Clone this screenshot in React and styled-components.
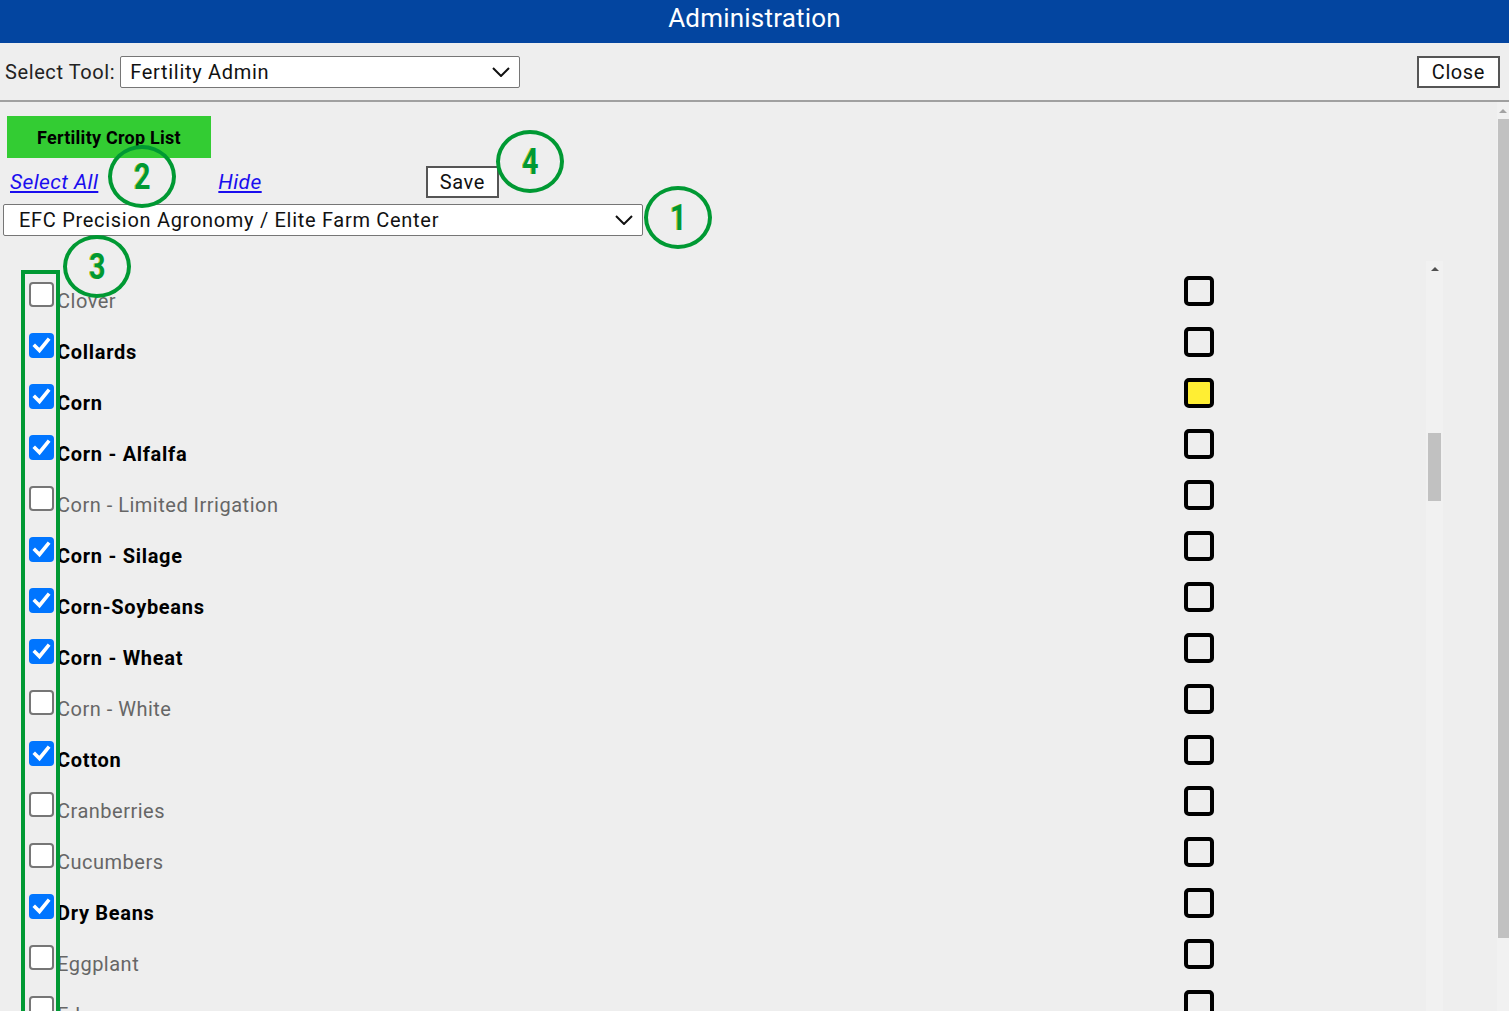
import React from "react";
import styled, { createGlobalStyle } from "styled-components";

const GlobalStyle = createGlobalStyle`
  html, body {
    margin: 0;
    padding: 0;
    height: 100%;
    overflow: hidden;
    background: #eeeeee;
    font-family: Roboto, "Liberation Sans", Arial, sans-serif;
  }
`;

const Page = styled.div`
  width: 1509px;
  height: 1011px;
  display: flex;
  flex-direction: column;
  overflow: hidden;
`;

const Header = styled.div`
  height: 43px;
  background: #0345a0;
  color: #fff;
  font-size: 26px;
  letter-spacing: 0.2px;
  display: flex;
  align-items: center;
  justify-content: center;
  padding-bottom: 7px;
  box-sizing: border-box;
`;

const Toolbar = styled.div`
  height: 59px;
  box-sizing: border-box;
  border-bottom: 2px solid #a0a0a0;
  display: flex;
  align-items: center;
  padding: 0 9px 0 5px;
  gap: 5px;
  color: #222;
  font-size: 20px;
  letter-spacing: 0.6px;
`;

const SelectBox = styled.div`
  width: ${(p) => p.width}px;
  height: 32px;
  box-sizing: border-box;
  background: #fff;
  border: 1px solid #767676;
  border-radius: 2px;
  display: flex;
  align-items: center;
  justify-content: space-between;
  padding: 0 9px 0 ${(p) => p.padLeft || 9}px;
  font-size: 20px;
  letter-spacing: 0.7px;
  color: #111;
`;

const Spacer = styled.div`
  flex: 1;
`;

const PlainButton = styled.button`
  height: 32px;
  padding: 0 ${(p) => p.padX || 12}px;
  background: #fff;
  border: 2px solid #555;
  font-family: Roboto, "Liberation Sans", Arial, sans-serif;
  font-size: 20px;
  letter-spacing: 0.6px;
  color: #111;
  margin: ${(p) => p.margin || 0};
`;

const Body = styled.div`
  flex: 1;
  display: flex;
  min-height: 0;
`;

const Content = styled.div`
  flex: 1;
  position: relative;
  display: flex;
  flex-direction: column;
  min-width: 0;
`;

const TabButton = styled.div`
  width: 204px;
  height: 42px;
  margin: 14px 0 0 7px;
  background: #33cc33;
  color: #000;
  font-weight: 700;
  font-size: 18px;
  letter-spacing: 0.25px;
  display: flex;
  align-items: center;
  justify-content: center;
`;

const LinkRow = styled.div`
  display: flex;
  align-items: center;
  margin: 8px 0 0 10px;
  height: 31px;
`;

const Link = styled.a`
  color: #1a0dee;
  font-style: italic;
  text-decoration: underline;
  font-size: 21px;
  letter-spacing: 0.4px;
  margin-left: ${(p) => p.ml || 0}px;
`;

const SelectRow = styled.div`
  margin: 7px 0 0 3px;
`;

const ListArea = styled.div`
  margin-top: 25px;
  flex: 1;
  display: flex;
  padding-right: 54px;
  min-height: 0;
`;

const List = styled.div`
  flex: 1;
  padding-top: 15px;
`;

const Row = styled.div`
  height: 51px;
  display: flex;
  align-items: flex-start;
  padding-left: 29px;
`;

const CheckBox = styled.div`
  width: 25px;
  height: 25px;
  box-sizing: border-box;
  margin: 6px 3px 0 0;
  border-radius: 4px;
  border: ${(p) => (p.on ? "none" : "2px solid #767676")};
  background: ${(p) => (p.on ? "#0075ff" : "#fff")};
  display: flex;
  align-items: center;
  justify-content: center;
`;

const CropName = styled.span`
  margin-top: 13px;
  line-height: 24px;
  font-size: 20px;
  letter-spacing: ${(p) => (p.on ? "0.7px" : "0.5px")};
  font-weight: ${(p) => (p.on ? 700 : 400)};
  color: ${(p) => (p.on ? "#000" : "#666")};
  flex: 1;
`;

const ColorBox = styled.div`
  width: 30px;
  height: 30px;
  box-sizing: border-box;
  border: 4px solid #000;
  border-radius: 5px;
  background: ${(p) => p.fill || "transparent"};
  margin-right: 212px;
`;

const Scrollbar = styled.div`
  width: ${(p) => p.w}px;
  background: #f1f1f1;
  display: flex;
  flex-direction: column;
  align-items: center;
`;

const UpArrow = styled.div`
  width: 0;
  height: 0;
  border-left: 4px solid transparent;
  border-right: 4px solid transparent;
  border-bottom: 4px solid ${(p) => p.color};
  margin-top: ${(p) => p.top}px;
`;

const Thumb = styled.div`
  width: ${(p) => p.w}px;
  height: ${(p) => p.h}px;
  margin-top: ${(p) => p.top}px;
  background: #c1c1c1;
`;

const Circle = styled.div`
  position: absolute;
  left: ${(p) => p.x}px;
  top: ${(p) => p.y}px;
  width: 60px;
  height: 55px;
  border: 4px solid #009933;
  border-radius: 50%;
  display: flex;
  align-items: center;
  justify-content: center;
`;

const Num = styled.span`
  color: #009933;
  font-weight: 700;
  font-size: 36px;
  line-height: 1;
  transform: scaleX(0.8);
  text-shadow: -1px 0 0 #c8c832;
`;

const ColumnMark = styled.div`
  position: absolute;
  left: 21px;
  top: 168px;
  width: 31px;
  height: 900px;
  border: 4px solid #009933;
`;

const Chevron = () => (
  <svg width="18" height="10" viewBox="0 0 18 10">
    <polyline points="1,1 9,9 17,1" fill="none" stroke="#111" strokeWidth="2" />
  </svg>
);

const Tick = () => (
  <svg width="19" height="17" viewBox="0 0 19 17">
    <polyline
      points="3,9 7.5,13.5 16,3"
      fill="none"
      stroke="#fff"
      strokeWidth="3.6"
      strokeLinecap="square"
    />
  </svg>
);

const crops = [
  ["Clover", false],
  ["Collards", true],
  ["Corn", true, "#ffee33"],
  ["Corn - Alfalfa", true],
  ["Corn - Limited Irrigation", false],
  ["Corn - Silage", true],
  ["Corn-Soybeans", true],
  ["Corn - Wheat", true],
  ["Corn - White", false],
  ["Cotton", true],
  ["Cranberries", false],
  ["Cucumbers", false],
  ["Dry Beans", true],
  ["Eggplant", false],
  ["Edamame", false],
];

const App = () => {
  return (
    <Page>
      <GlobalStyle />
      <Header>Administration</Header>
      <Toolbar>
        <span>Select Tool:</span>
        <SelectBox width={400}>
          <span>Fertility Admin</span>
          <Chevron />
        </SelectBox>
        <Spacer />
        <PlainButton padX={13}>Close</PlainButton>
      </Toolbar>
      <Body>
        <Content>
          <TabButton>Fertility Crop List</TabButton>
          <LinkRow>
            <Link>Select All</Link>
            <Link ml={120}>Hide</Link>
            <PlainButton padX={12} margin="0 0 0 164px">
              Save
            </PlainButton>
          </LinkRow>
          <SelectRow>
            <SelectBox width={640} padLeft={15}>
              <span>EFC Precision Agronomy / Elite Farm Center</span>
              <Chevron />
            </SelectBox>
          </SelectRow>
          <ListArea>
            <List>
              {crops.map(([name, on, fill]) => (
                <Row key={name}>
                  <CheckBox on={on}>{on && <Tick />}</CheckBox>
                  <CropName on={on}>{name}</CropName>
                  <ColorBox fill={fill} />
                </Row>
              ))}
            </List>
            <Scrollbar w={17}>
              <UpArrow color="#505050" top={6} />
              <Thumb w={13} h={68} top={162} />
            </Scrollbar>
          </ListArea>
          <ColumnMark />
          <Circle x={108} y={43}>
            <Num>2</Num>
          </Circle>
          <Circle x={496} y={28}>
            <Num>4</Num>
          </Circle>
          <Circle x={644} y={84}>
            <Num>1</Num>
          </Circle>
          <Circle x={63} y={133}>
            <Num>3</Num>
          </Circle>
        </Content>
        <Scrollbar w={12}>
          <UpArrow color="#a3a3a3" top={7} />
          <Thumb w={11} h={819} top={6} />
        </Scrollbar>
      </Body>
    </Page>
  );
};

export default App;
